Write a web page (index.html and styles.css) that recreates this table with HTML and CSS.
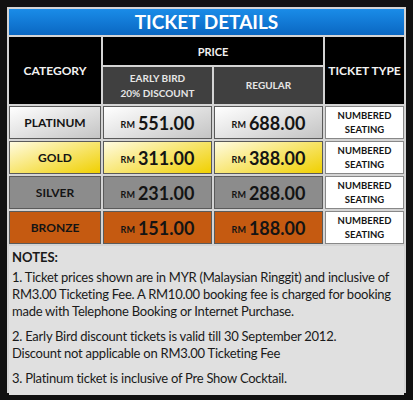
FILE: index.html
```html
<!DOCTYPE html>
<html lang="en">

<head>
    <meta charset="UTF-8">
    <meta name="viewport" content="width=device-width, initial-scale=1.0">
    <title>Ticket Details</title>
    <link rel="stylesheet" href="styles.css">
</head>

<body>
    <div class="card">
        <h1 class="title">TICKET DETAILS</h1>
        <div class="price-grid">
            <div class="head head-tall">CATEGORY</div>
            <div class="head head-wide">PRICE</div>
            <div class="head head-tall">TICKET TYPE</div>
            <div class="sub-head">EARLY BIRD<br>20% DISCOUNT</div>
            <div class="sub-head">REGULAR</div>

            <div class="cell platinum">PLATINUM</div>
            <div class="cell platinum"><span class="rm">RM</span> 551.00</div>
            <div class="cell platinum"><span class="rm">RM</span> 688.00</div>
            <div class="cell seat">NUMBERED<br>SEATING</div>

            <div class="cell gold">GOLD</div>
            <div class="cell gold"><span class="rm">RM</span> 311.00</div>
            <div class="cell gold"><span class="rm">RM</span> 388.00</div>
            <div class="cell seat">NUMBERED<br>SEATING</div>

            <div class="cell silver">SILVER</div>
            <div class="cell silver"><span class="rm">RM</span> 231.00</div>
            <div class="cell silver"><span class="rm">RM</span> 288.00</div>
            <div class="cell seat">NUMBERED<br>SEATING</div>

            <div class="cell bronze">BRONZE</div>
            <div class="cell bronze"><span class="rm">RM</span> 151.00</div>
            <div class="cell bronze"><span class="rm">RM</span> 188.00</div>
            <div class="cell seat">NUMBERED<br>SEATING</div>
        </div>
        <div class="notes">
            <h2>NOTES:</h2>
            <p>1. Ticket prices shown are in MYR (Malaysian Ringgit) and inclusive of RM3.00 Ticketing Fee. A RM10.00 booking fee is charged for booking made with Telephone Booking or Internet Purchase.</p>
            <p>2. Early Bird discount tickets is valid till 30 September 2012.<br>Discount not applicable on RM3.00 Ticketing Fee</p>
            <p>3. Platinum ticket is inclusive of Pre Show Cocktail.</p>
        </div>
    </div>
</body>

</html>
```

FILE: styles.css
```css
* {
    margin: 0;
    padding: 0;
    box-sizing: border-box;
}

body {
    font-family: Lato, "Open Sans", sans-serif;
    background-color: #111;
    width: 413px;
    height: 400px;
    padding: 7px;
}

.card {
    border: 2px solid #d4d4d4;
    background-color: #d4d4d4;
    height: 386px;
    display: flex;
    flex-direction: column;
}

.title {
    height: 26px;
    background: linear-gradient(#1a8ce8, #0a67c2);
    color: white;
    font-size: 19px;
    font-weight: bold;
    text-align: center;
    line-height: 26px;
    margin-bottom: 2px;
}

.price-grid {
    display: grid;
    grid-template-columns: 92px 109px 109px 1fr;
    grid-template-rows: 28px 37px repeat(4, 33px);
    gap: 2px;
    margin-bottom: 2px;
}

.head,
.sub-head,
.cell {
    display: flex;
    align-items: center;
    justify-content: center;
    text-align: center;
    font-weight: bold;
}

.head {
    background-color: #000;
    color: #f2f2f2;
    font-size: 12px;
}

.head-tall {
    grid-row: span 2;
}

.head-wide {
    grid-column: span 2;
    font-size: 11px;
}

.sub-head {
    background-color: #404040;
    color: #e6e6e6;
    font-size: 10px;
    line-height: 15px;
}

.cell {
    border: 1px solid #5a5a5a;
    color: #141414;
    font-size: 12px;
}

.cell .rm {
    font-size: 9px;
    margin-right: 3px;
    padding-top: 3px;
}

.cell:nth-child(4n+3),
.cell:nth-child(4n+4) {
    font-size: 18px;
}

.platinum {
    background: linear-gradient(160deg, #ffffff, #c4c4c4);
}

.gold {
    background: linear-gradient(160deg, #fffbe0, #f0d000);
}

.silver {
    background-color: #8c8c8c;
}

.bronze {
    background-color: #c55a11;
}

.seat {
    background-color: #fff;
    font-size: 9.5px;
    line-height: 14px;
    border-color: #888;
}

.notes {
    flex: 1;
    background-color: #e0e0e0;
    padding: 3px 3px 0;
    color: #1a1a1a;
    font-size: 13px;
    line-height: 17px;
    letter-spacing: -0.25px;
}

.notes h2 {
    font-size: 13px;
    margin-bottom: 3px;
    letter-spacing: 0;
}

.notes p {
    margin-bottom: 8px;
}
```
